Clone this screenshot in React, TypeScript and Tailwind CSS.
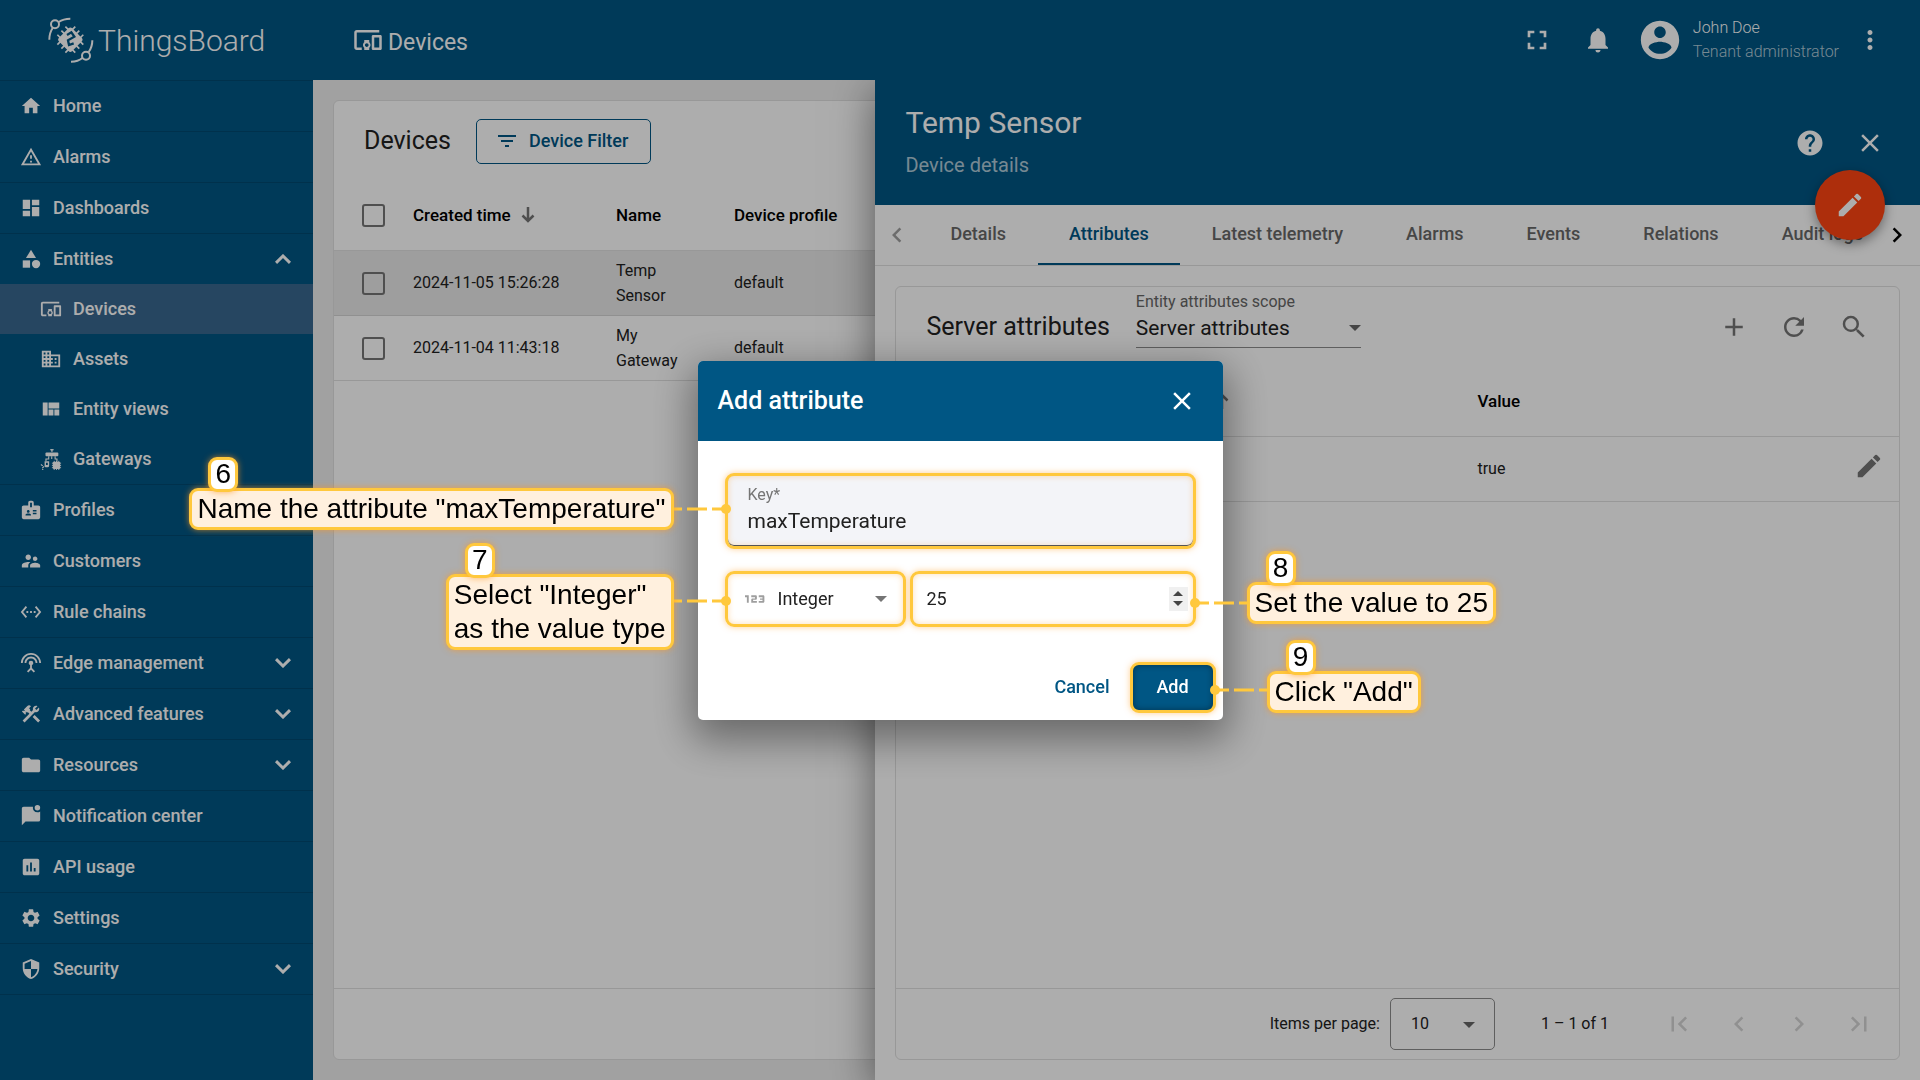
import type { ReactNode } from "react";
import {
  Md123,
  MdAdd,
  MdBadge,
  MdCategory,
  MdChevronLeft,
  MdChevronRight,
  MdClose,
  MdConstruction,
  MdDashboard,
  MdDevicesOther,
  MdDomain,
  MdEdit,
  MdFilterList,
  MdFirstPage,
  MdFolder,
  MdFullscreen,
  MdHelp,
  MdHome,
  MdInsertChart,
  MdLastPage,
  MdMoreVert,
  MdNotifications,
  MdRefresh,
  MdSearch,
  MdSecurity,
  MdSettings,
  MdSettingsEthernet,
  MdSettingsInputAntenna,
  MdSupervisorAccount,
  MdViewQuilt,
} from "react-icons/md";

function Logo() {
  return (
    <svg viewBox="0 0 138 138" className="size-[46px]" fill="none" stroke="white" strokeWidth="6">
      <circle cx="21" cy="22" r="12" />
      <path d="M14 33Q4 48 4 68M32 15Q46 5 67 5" />
      <circle cx="114" cy="116" r="12" />
      <path d="M122 105Q133 90 133 70M104 122Q90 134 69 134" />
      <g transform="rotate(45 67 68)">
        <rect x="39" y="40" width="56" height="56" rx="8" fill="white" stroke="none" />
        <path d="M50 30V106M67 30V106M84 30V106M29 51H105M29 68H105M29 85H105" strokeWidth="5" />
      </g>
      <path d="M57 54L70 46L79 59L60 70L63 84L77 79" stroke="#005684" strokeWidth="7" />
    </svg>
  );
}

function AlertIcon() {
  return (
    <svg viewBox="0 0 24 24" className="size-[22px]" fill="currentColor">
      <path d="M12 2L1 21H23M12 6L19.53 19H4.47M11 10V14H13V10M11 16V18H13V16" />
    </svg>
  );
}

function GatewayIcon() {
  return (
    <svg viewBox="0 0 24 24" className="size-[22px]" fill="currentColor">
      <path d="M12.2 1h1.6v3h-1.6zM11 1.4h4v1h-4z" />
      <rect x="6" y="5" width="14" height="4" rx="1" />
      <path d="M9.5 9v3H6.500v2.500M16.500 9v3h2v3M12.800 9v3" fill="none" stroke="currentColor" strokeWidth="1.200" />
      <path d="M5 14.500h5v4.500a2 2 0 0 1-2 2H6.500a1.500 1.500 0 0 1-1.500-1.500zm1.500 1.500v2.500h2V16z" fillRule="evenodd" />
      <path d="M4.500 20l-2 2M3 19.500l-2-1.500M3.500 23l-1 1" fill="none" stroke="currentColor" strokeWidth="1.200" />
      <rect x="14" y="15" width="8" height="8" rx="1.500" />
      <path d="M15.500 14v10M18 14v10M20.500 14v10M13 16.500h10M13 19h10M13 21.500h10" stroke="currentColor" />
    </svg>
  );
}

function MessageBadgeIcon() {
  return (
    <svg viewBox="0 0 24 24" className="size-[22px]" fill="currentColor">
      <path d="M22 7v9a2 2 0 0 1-2 2H6l-4 4V4c0-1.100.900-2 2-2h10.100A5 5 0 0 0 19 8c1.130 0 2.160-.370 3-1zM16 3a3 3 0 1 0 6 0 3 3 0 0 0-6 0z" />
    </svg>
  );
}

function AccountIcon() {
  return (
    <svg viewBox="0 0 24 24" className="size-[46px]" fill="currentColor">
      <path d="M12 2C6.480 2 2 6.480 2 12s4.480 10 10 10 10-4.480 10-10S17.520 2 12 2zm0 3c1.660 0 3 1.340 3 3s-1.340 3-3 3-3-1.340-3-3 1.340-3 3-3zm0 14.200c-2.500 0-4.710-1.280-6-3.220.030-1.990 4-3.080 6-3.080 1.990 0 5.970 1.090 6 3.080-1.290 1.940-3.500 3.220-6 3.220z" />
    </svg>
  );
}

function Caret() {
  return (
    <svg viewBox="0 0 12 6" className="pointer-events-none h-[6px] w-3" fill="currentColor">
      <path d="M0 0H12L6 6z" />
    </svg>
  );
}

function NavChevron({ up = false }: { up?: boolean }) {
  return (
    <svg
      viewBox="0 0 16 10"
      className={up ? "h-[10px] w-4 rotate-180" : "h-[10px] w-4"}
      fill="none"
      stroke="currentColor"
      strokeWidth="3"
    >
      <path d="M1 1.200L8 8L15 1.200" />
    </svg>
  );
}

function SortArrow({ up = false }: { up?: boolean }) {
  return (
    <svg
      viewBox="0 0 14 16"
      className={up ? "h-4 w-[14px] rotate-180" : "h-4 w-[14px]"}
      fill="none"
      stroke="#757575"
      strokeWidth="2.500"
    >
      <path d="M7 0V14M1.500 8.500L7 14L12.500 8.500" />
    </svg>
  );
}

type NavEntry = { label: string; icon: ReactNode; more?: boolean; open?: boolean; children?: NavEntry[] };

const nav: NavEntry[] = [
  { label: "Home", icon: <MdHome size={22} /> },
  { label: "Alarms", icon: <AlertIcon /> },
  { label: "Dashboards", icon: <MdDashboard size={22} /> },
  {
    label: "Entities",
    icon: <MdCategory size={22} />,
    open: true,
    children: [
      { label: "Devices", icon: <MdDevicesOther size={22} />, open: true },
      { label: "Assets", icon: <MdDomain size={22} /> },
      { label: "Entity views", icon: <MdViewQuilt size={22} /> },
      { label: "Gateways", icon: <GatewayIcon /> },
    ],
  },
  { label: "Profiles", icon: <MdBadge size={22} /> },
  { label: "Customers", icon: <MdSupervisorAccount size={22} /> },
  { label: "Rule chains", icon: <MdSettingsEthernet size={22} /> },
  { label: "Edge management", icon: <MdSettingsInputAntenna size={22} />, more: true },
  { label: "Advanced features", icon: <MdConstruction size={22} />, more: true },
  { label: "Resources", icon: <MdFolder size={22} />, more: true },
  { label: "Notification center", icon: <MessageBadgeIcon /> },
  { label: "API usage", icon: <MdInsertChart size={22} /> },
  { label: "Settings", icon: <MdSettings size={22} /> },
  { label: "Security", icon: <MdSecurity size={22} />, more: true },
];

function Sidebar() {
  return (
    <aside className="flex w-[313px] shrink-0 flex-col bg-[#005684] text-white">
      <div className="flex h-20 items-center gap-1 pl-12">
        <Logo />
        <span className="text-[30px] font-light">ThingsBoard</span>
      </div>
      <ul className="border-t border-black/15 text-lg font-medium">
        {nav.map((n) => (
          <li key={n.label} className="border-b border-black/15">
            <a href="#" className="flex h-[50px] items-center gap-[11px] pr-[22px] pl-5">
              {n.icon}
              <span className="grow">{n.label}</span>
              {n.more && <NavChevron />}
              {n.open && <NavChevron up />}
            </a>
            {n.children && (
              <ul>
                {n.children.map((c) => (
                  <li key={c.label}>
                    <a
                      href="#"
                      className={
                        c.open
                          ? "flex h-[50px] items-center gap-[11px] bg-[#386890] pl-10"
                          : "flex h-[50px] items-center gap-[11px] pl-10"
                      }
                    >
                      {c.icon}
                      <span>{c.label}</span>
                    </a>
                  </li>
                ))}
              </ul>
            )}
          </li>
        ))}
      </ul>
    </aside>
  );
}

function TopBar() {
  return (
    <header className="flex h-20 shrink-0 items-center bg-[#005684] pr-[35px] pl-10 text-white">
      <h1 className="flex grow items-center gap-[5px] text-[23px]">
        <MdDevicesOther size={30} />
        <span className="pt-[6px]">Devices</span>
      </h1>
      <button aria-label="Fullscreen" className="mr-[30px]">
        <MdFullscreen size={32} />
      </button>
      <button aria-label="Notifications" className="mr-6">
        <MdNotifications size={30} />
      </button>
      <AccountIcon />
      <div className="mr-4 ml-[10px] text-base leading-6 font-light">
        <div>John Doe</div>
        <div className="text-white/70">Tenant administrator</div>
      </div>
      <button aria-label="More">
        <MdMoreVert size={30} />
      </button>
    </header>
  );
}

function Tick({ label }: { label: string }) {
  return (
    <input
      type="checkbox"
      aria-label={label}
      className="block size-[23px] appearance-none rounded-[3px] border-2 border-[#757575]"
    />
  );
}

const devices = [
  { time: "2024-11-05 15:26:28", name: "Temp Sensor", profile: "default", active: true },
  { time: "2024-11-04 11:43:18", name: "My Gateway", profile: "default", active: false },
];

function DevicesCard() {
  return (
    <section className="flex grow flex-col rounded-md border border-[#e0e0e0] bg-white text-[#212121]">
      <div className="flex h-[79px] shrink-0 items-center gap-[25px] pt-px pl-[30px]">
        <h2 className="text-[25px]">Devices</h2>
        <button className="flex h-[45px] items-center gap-[10px] rounded-[5px] border border-[#005684] pr-[22px] pl-[18px] text-lg font-medium text-[#005684]">
          <MdFilterList size={24} />
          Device Filter
        </button>
      </div>
      <table className="w-full table-fixed text-left text-base [&_td]:pt-px [&_th]:pt-px">
        <thead>
          <tr className="h-[70px] border-b border-[#e0e0e0] text-black">
            <th className="w-[79px] pl-7">
              <Tick label="Select all devices" />
            </th>
            <th className="w-[203px] text-[17px] font-medium">
              <span className="flex items-center gap-[10px]">
                Created time <SortArrow />
              </span>
            </th>
            <th className="w-[118px] text-[17px] font-medium">Name</th>
            <th className="text-[17px] font-medium">Device profile</th>
          </tr>
        </thead>
        <tbody>
          {devices.map((d) => (
            <tr
              key={d.name}
              className={d.active ? "h-[65px] border-b border-[#d4d4d4] bg-[#e9e9e9]" : "h-[65px] border-b border-[#e0e0e0]"}
            >
              <td className="pl-7">
                <Tick label={d.name} />
              </td>
              <td>{d.time}</td>
              <td className="pr-10 leading-[25px]">{d.name}</td>
              <td>{d.profile}</td>
            </tr>
          ))}
        </tbody>
      </table>
      <div className="mt-auto h-[71px] border-t border-[#e0e0e0]" />
    </section>
  );
}

const tabs = ["Details", "Attributes", "Latest telemetry", "Alarms", "Events", "Relations", "Audit logs"];

function Drawer() {
  return (
    <section className="absolute inset-y-0 right-0 flex w-[65%] flex-col bg-white text-[#212121] shadow-[0_10px_40px_rgba(0,0,0,0.5)]">
      <header className="relative flex h-[125px] shrink-0 items-center bg-[#005684] pr-[35px] pl-[30px] text-white">
        <div className="grow">
          <h2 className="text-[30px] leading-9">Temp Sensor</h2>
          <p className="mt-2 text-xl leading-8 text-white/70">Device details</p>
        </div>
        <button aria-label="Help" className="mr-[30px]">
          <MdHelp size={30} />
        </button>
        <button aria-label="Close details">
          <MdClose size={30} />
        </button>
        <button
          aria-label="Edit"
          className="absolute -bottom-[35px] right-[35px] z-10 flex size-[70px] items-center justify-center rounded-full bg-[#ff4512] shadow-[0_4px_12px_rgba(0,0,0,0.4)]"
        >
          <MdEdit size={30} />
        </button>
      </header>
      <nav className="flex h-[61px] shrink-0 items-stretch border-b border-[#e0e0e0] text-lg font-medium text-[#686868]">
        <button aria-label="Previous tabs" className="w-11 shrink-0 pl-[7px] text-[#a0a0a0]">
          <MdChevronLeft size={30} />
        </button>
        <div className="flex min-w-0 grow gap-px overflow-hidden">
          {tabs.map((t) => (
            <button
              key={t}
              className={
                t === "Attributes"
                  ? "shrink-0 border-b-2 border-[#005684] px-[31px] text-[#005684]"
                  : "shrink-0 border-b-2 border-transparent px-[31px]"
              }
            >
              {t}
            </button>
          ))}
        </div>
        <button aria-label="Next tabs" className="w-[38px] shrink-0 text-black">
          <MdChevronRight size={30} />
        </button>
      </nav>
      <div className="m-5 flex grow flex-col rounded-md border border-[#e0e0e0]">
        <div className="flex h-[79px] shrink-0 items-center px-[30px] pt-px">
          <h3 className="text-[25px]">Server attributes</h3>
          <div className="relative mb-5 ml-[26px] flex h-[62px] w-[225px] flex-col border-b border-[#8c8c8c] text-[21px]">
            <label htmlFor="scope" className="mt-1 text-base leading-6 text-[#666]">
              Entity attributes scope
            </label>
            <select id="scope" className="w-full appearance-none leading-7">
              <option>Server attributes</option>
            </select>
            <span className="pointer-events-none absolute right-0 bottom-4 text-[#666]">
              <Caret />
            </span>
          </div>
          <div className="ml-auto flex gap-[30px] text-[#757575]">
            <button aria-label="Add attribute">
              <MdAdd size={30} />
            </button>
            <button aria-label="Refresh">
              <MdRefresh size={30} />
            </button>
            <button aria-label="Search">
              <MdSearch size={30} />
            </button>
          </div>
        </div>
        <table className="w-full table-fixed text-left text-base [&_td]:pt-px [&_th]:pt-px">
          <thead>
            <tr className="h-[70px] border-b border-[#e0e0e0] text-black">
              <th className="w-[79px] pl-7">
                <Tick label="Select all attributes" />
              </th>
              <th className="w-[198px] text-[17px] font-medium">Last update time</th>
              <th className="w-[304px] text-[17px] font-medium">
                <span className="flex items-center gap-[14px]">
                  Key <SortArrow up />
                </span>
              </th>
              <th className="text-[17px] font-medium">Value</th>
              <th className="w-[60px]" />
            </tr>
          </thead>
          <tbody>
            <tr className="h-[65px] border-b border-[#e0e0e0]">
              <td className="pl-7">
                <Tick label="active" />
              </td>
              <td>2024-11-05 15:26:28</td>
              <td>active</td>
              <td>true</td>
              <td>
                <button aria-label="Edit value" className="block pb-[6px] pl-[15px] text-[#757575]">
                  <MdEdit size={30} />
                </button>
              </td>
            </tr>
          </tbody>
        </table>
        <div className="mt-auto flex h-[71px] items-center justify-end border-t border-[#e0e0e0] pr-[25px] text-base">
          <label htmlFor="page-size">Items per page:</label>
          <div className="relative ml-[10px]">
            <select
              id="page-size"
              className="h-[52px] w-[105px] appearance-none rounded-[5px] border border-[#8c8c8c] pl-5"
            >
              <option>10</option>
            </select>
            <span className="pointer-events-none absolute top-6 right-5 text-[#666]">
              <Caret />
            </span>
          </div>
          <span className="mr-[55px] ml-[46px]">1 – 1 of 1</span>
          <div className="flex gap-[30px] text-[#d4d4d4]">
            <button aria-label="First page" disabled>
              <MdFirstPage size={30} />
            </button>
            <button aria-label="Previous page" disabled>
              <MdChevronLeft size={30} />
            </button>
            <button aria-label="Next page" disabled>
              <MdChevronRight size={30} />
            </button>
            <button aria-label="Last page" disabled>
              <MdLastPage size={30} />
            </button>
          </div>
        </div>
      </div>
    </section>
  );
}

type CalloutProps = { step: number; side: "left" | "right"; className: string; line?: string; children: ReactNode };

/* A numbered hint joined to its field by a dashed line that ends in a dot. */
function Callout({ step, side, className, line = "", children }: CalloutProps) {
  return (
    <div
      className={
        side === "left"
          ? `pointer-events-none absolute right-full flex items-center ${className}`
          : `pointer-events-none absolute left-full flex flex-row-reverse items-center ${className}`
      }
    >
      <div className="relative rounded-[9px] border-[3px] border-[#ffc83d] bg-[#fff0de] px-[5px] font-[Liberation_Sans,sans-serif] text-[28px] leading-[34px] whitespace-nowrap text-black shadow-[0_0_6px_rgba(255,150,30,0.7)]">
        <span className="absolute -top-[34px] left-4 flex h-[35px] w-[30px] items-center justify-center rounded-[9px] border-[3px] border-[#ffc83d] bg-white shadow-[0_0_6px_rgba(255,150,30,0.7)]">
          {step}
        </span>
        <div className="py-px">{children}</div>
      </div>
      <svg
        viewBox="0 0 52 12"
        className={side === "left" ? `mr-[2px] h-3 w-[52px] ${line}` : `ml-[2px] h-3 w-[52px] rotate-180 ${line}`}
        overflow="visible"
      >
        <path d="M0 6H8M13 6H33M38 6H52" stroke="#ffc83d" strokeWidth="3" />
        <circle cx="52" cy="6" r="5" fill="#ffc83d" />
      </svg>
    </div>
  );
}

function AddAttributeDialog() {
  return (
    <div className="fixed inset-0 z-20 flex items-center justify-center bg-black/32">
      <form
        role="dialog"
        aria-label="Add attribute"
        className="w-[525px] rounded-[5px] bg-white text-[#212121] shadow-[0_14px_40px_6px_rgba(0,0,0,0.4)]"
      >
        <header className="flex h-20 items-center justify-between rounded-t-[5px] bg-[#005684] pr-[26px] pl-5 text-white">
          <h2 className="text-[25px] font-medium">Add attribute</h2>
          <button type="button" aria-label="Close">
            <MdClose size={30} />
          </button>
        </header>
        <div className="flex flex-col gap-[22px] px-[27px] pt-8">
          <div className="relative flex h-[76px] flex-col rounded-[9px] border-[3px] border-[#ffc83d] bg-[#f3f4f8] px-5 pt-[7px] shadow-[0_0_6px_rgba(255,160,40,0.5),inset_0_-1px_0_#555,inset_0_0_6px_rgba(255,160,40,0.35)]">
            <label htmlFor="key" className="text-base leading-6 text-[#757575]">
              Key*
            </label>
            <input id="key" defaultValue="maxTemperature" className="w-full bg-transparent text-[21px] leading-7" />
            <Callout step={6} side="left" className="top-3">
              Name the attribute "maxTemperature"
            </Callout>
          </div>
          <div className="flex gap-1">
            <div className="relative flex h-14 w-[181px] items-center rounded-[9px] border-[3px] border-[#ffc83d] pl-3 shadow-[0_0_6px_rgba(255,160,40,0.5),inset_0_0_6px_rgba(255,160,40,0.35)]">
              <span className="text-[#9e9e9e]">
                <Md123 size={30} />
              </span>
              <select aria-label="Value type" className="ml-2 grow appearance-none text-lg">
                <option>Integer</option>
              </select>
              <span className="pointer-events-none absolute right-4 text-[#757575]">
                <Caret />
              </span>
              <Callout step={7} side="left" className="top-0" line="mb-[22px]">
                Select "Integer"
                <br />
                as the value type
              </Callout>
            </div>
            <div className="relative flex h-14 min-w-0 grow items-center rounded-[9px] border-[3px] border-[#ffc83d] pr-[5px] pl-[14px] shadow-[0_0_6px_rgba(255,160,40,0.5),inset_0_0_6px_rgba(255,160,40,0.35)]">
              <input
                type="number"
                aria-label="Value"
                defaultValue={25}
                className="w-full min-w-0 [appearance:textfield] text-lg [&::-webkit-inner-spin-button]:appearance-none"
              />
              <div className="flex h-6 w-[19px] shrink-0 flex-col items-center justify-center gap-[5px] bg-[#f0f0f0] text-[#454545]">
                <button type="button" aria-label="Increase">
                  <svg viewBox="0 0 10 5" className="block h-[5px] w-[10px]" fill="currentColor">
                    <path d="M0 5L5 0L10 5z" />
                  </svg>
                </button>
                <button type="button" aria-label="Decrease">
                  <svg viewBox="0 0 10 5" className="block h-[5px] w-[10px]" fill="currentColor">
                    <path d="M0 0L5 5L10 0z" />
                  </svg>
                </button>
              </div>
              <Callout step={8} side="right" className="top-2">
                Set the value to 25
              </Callout>
            </div>
          </div>
        </div>
        <footer className="flex items-center justify-end gap-5 pt-[35px] pr-[7px] pb-[7px] text-lg font-medium">
          <button type="button" className="text-[#005684]">
            Cancel
          </button>
          <div className="relative rounded-[9px] border-[3px] border-[#ffc83d] bg-[#005684] text-white shadow-[0_0_6px_rgba(255,160,40,0.5)]">
            <button
              type="submit"
              className="block h-[45px] w-20 rounded-[6px] shadow-[inset_0_0_6px_rgba(0,0,0,0.4)]"
            >
              Add
            </button>
            <Callout step={9} side="right" className="top-[6px] font-normal" line="mb-1">
              Click "Add"
            </Callout>
          </div>
        </footer>
      </form>
    </div>
  );
}

export default function App() {
  return (
    <div className="flex h-screen overflow-hidden font-[Roboto,sans-serif]">
      <Sidebar />
      <div className="flex min-w-0 grow flex-col">
        <TopBar />
        <main className="relative flex grow overflow-hidden bg-[#eee] p-5">
          <DevicesCard />
          <Drawer />
        </main>
      </div>
      <AddAttributeDialog />
    </div>
  );
}
